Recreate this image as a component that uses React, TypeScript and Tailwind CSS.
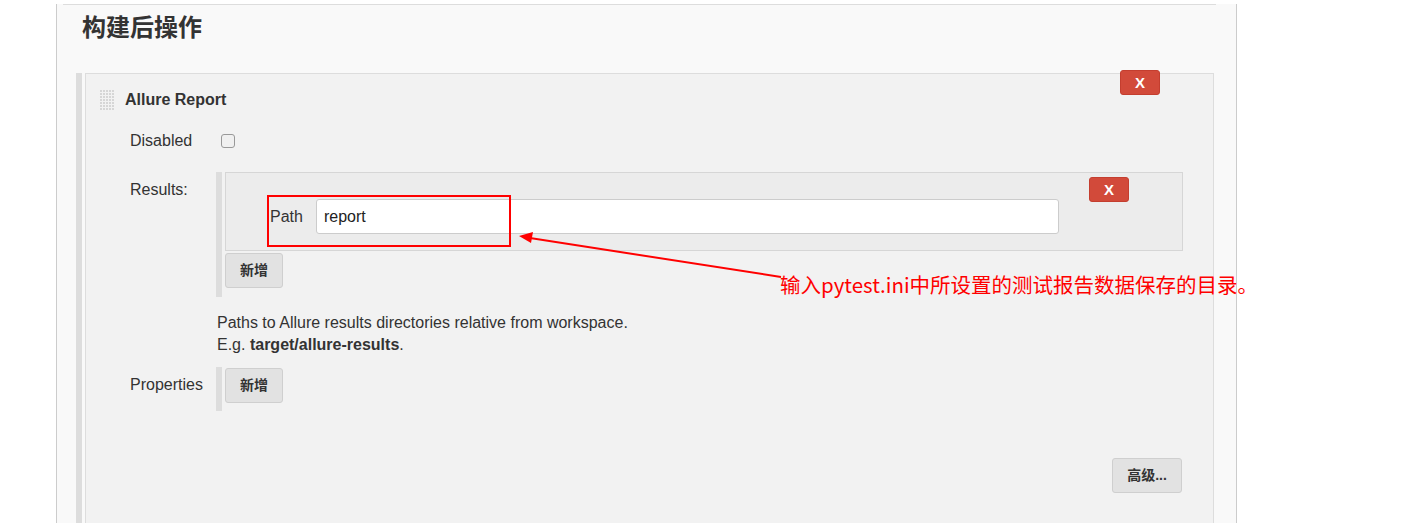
const Grip = () => (
  <svg width="14" height="21" viewBox="0 0 14 21" className="block">
    {Array.from({ length: 7 }).map((_, r) =>
      Array.from({ length: 5 }).map((_, c) => (
        <rect key={`${r}-${c}`} x={c * 3} y={r * 3} width="2" height="2" fill="#d6d6d6" />
      ))
    )}
  </svg>
);

const DeleteButton = () => (
  <div className="w-[40px] h-[25px] rounded-[3px] bg-[#d24a3a] border border-[#c43e2f] flex items-center justify-center text-white font-bold text-[15px] leading-none">
    X
  </div>
);

const GrayButton = ({ label, w }: { label: string; w: string }) => (
  <div
    className={`${w} h-[35px] rounded-[3px] bg-[#e2e2e2] border border-[#cfcfcf] flex items-center justify-center text-[#333] text-[14px] font-bold`}
  >
    {label}
  </div>
);

export default function App() {
  return (
    <div className="relative w-[1418px] h-[523px] overflow-hidden bg-white text-[#333] font-['Liberation_Sans','Noto_Sans_CJK_SC',sans-serif]">
      <div className="ml-[56px] w-[1181px] h-full border-x border-[#cccccc] bg-[#f9f9f9]">
        <div className="ml-[6px] mt-[4px] w-[1153px] h-px bg-[#dddddd]" />
        <h2 className="pl-[25px] pt-[7px] text-[24px] leading-[32px] font-bold text-[#333]">构建后操作</h2>

        <div className="mt-[29px] ml-[19px] flex gap-[3px]">
          <div className="w-[6px] bg-[#dddddd]" />
          <div className="relative w-[1129px] h-[460px] border border-[#dddddd] bg-[#f2f2f2]">
            <div className="absolute right-[53px] top-[-4px]">
              <DeleteButton />
            </div>

            <div className="flex items-center gap-[11px] pl-[14px] pt-[14px]">
              <Grip />
              <span className="text-[16px] font-bold text-[#333]">Allure Report</span>
            </div>

            <div className="flex items-center mt-[17px]">
              <div className="w-[130px] pl-[44px] text-[16px]">Disabled</div>
              <div className="ml-[5px] w-[14px] h-[14px] rounded-[3px] border border-[#999] bg-[#f0f0f0]" />
            </div>

            <div className="flex mt-[19px]">
              <div className="w-[130px] pl-[44px] pt-[6px] text-[16px]">Results:</div>
              <div className="flex gap-[3px]">
                <div className="w-[6px] bg-[#dddddd]" />
                <div className="pb-[9px]">
                  <div className="relative w-[958px] h-[79px] border border-[#d6d6d6] bg-[#ececec] flex items-center pl-[44px] pt-[10px]">
                    <span className="text-[16px]">Path</span>
                    <div className="ml-[13px] w-[743px] h-[35px] rounded-[3px] border border-[#cccccc] bg-white flex items-center pl-[7px] text-[16px] text-[#222]">
                      report
                    </div>
                    <div className="absolute right-[53px] top-[4px]">
                      <DeleteButton />
                    </div>
                  </div>
                  <div className="mt-[2px]">
                    <GrayButton label="新增" w="w-[58px]" />
                  </div>
                </div>
              </div>
            </div>

            <div className="pl-[131px] pt-[15px] text-[16px] leading-[22px] text-[#333]">
              <div>Paths to Allure results directories relative from workspace.</div>
              <div>
                E.g. <b>target/allure-results</b>.
              </div>
            </div>

            <div className="flex items-start mt-[11px]">
              <div className="w-[130px] pl-[44px] pt-[6px] text-[16px]">Properties</div>
              <div className="flex gap-[3px] h-[44px]">
                <div className="w-[6px] bg-[#dddddd]" />
                <div className="pt-[1px]">
                  <GrayButton label="新增" w="w-[58px]" />
                </div>
              </div>
            </div>

            <div className="flex justify-end pr-[31px] mt-[47px]">
              <GrayButton label="高级..." w="w-[70px]" />
            </div>
          </div>
        </div>
      </div>

      {/* annotation */}
      <div className="absolute left-[267px] top-[195px] w-[244px] h-[52px] border-2 border-[#ff0000]" />
      <svg className="absolute left-0 top-0" width="1418" height="523">
        <line x1="781" y1="277" x2="530" y2="238" stroke="#ff0000" strokeWidth="2" />
        <polygon points="519,236 533,232 531,243" fill="#ff0000" />
      </svg>
      <div className="absolute left-[780px] top-[270px] text-[20.5px] leading-[28px] text-[#ff0000] font-['Noto_Sans_CJK_SC',sans-serif] whitespace-nowrap">
        输入pytest.ini中所设置的测试报告数据保存的目录。
      </div>
    </div>
  );
}
